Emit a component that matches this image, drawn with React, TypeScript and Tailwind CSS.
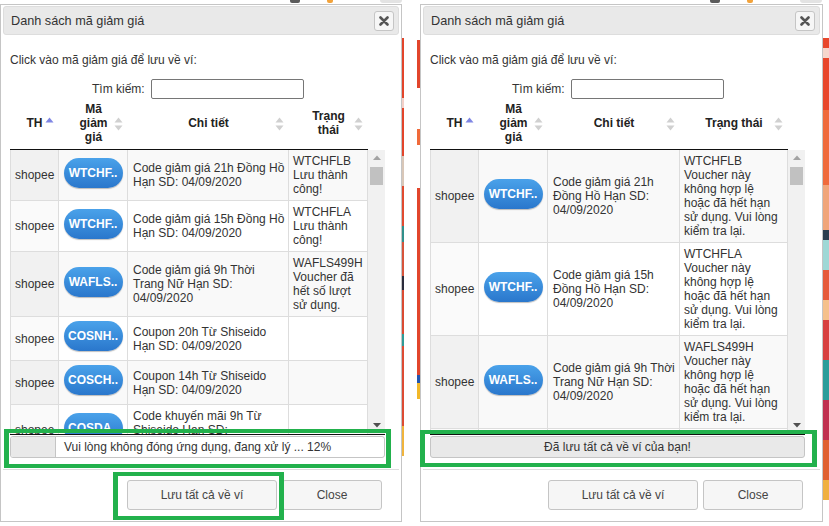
import React from 'react';

type Row = { code: string; detail: string[]; status: string[] };
type Head = { lines: string[]; active?: boolean };

const invalid = (code: string) => [
  code,
  'Voucher này',
  'không hợp lệ',
  'hoặc đã hết hạn',
  'sử dụng. Vui lòng',
  'kiểm tra lại.',
];

const leftRows: Row[] = [
  { code: 'WTCHF..', detail: ['Code giảm giá 21h Đồng Hồ', 'Hạn SD: 04/09/2020'], status: ['WTCHFLB', 'Lưu thành', 'công!'] },
  { code: 'WTCHF..', detail: ['Code giảm giá 15h Đồng Hồ', 'Hạn SD: 04/09/2020'], status: ['WTCHFLA', 'Lưu thành', 'công!'] },
  { code: 'WAFLS..', detail: ['Code giảm giá 9h Thời', 'Trang Nữ Hạn SD:', '04/09/2020'], status: ['WAFLS499H', 'Voucher đã', 'hết số lượt', 'sử dụng.'] },
  { code: 'COSNH..', detail: ['Coupon 20h Từ Shiseido', 'Hạn SD: 04/09/2020'], status: [] },
  { code: 'COSCH..', detail: ['Coupon 14h Từ Shiseido', 'Hạn SD: 04/09/2020'], status: [] },
  { code: 'COSDA..', detail: ['Code khuyến mãi 9h Từ', 'Shiseido Hạn SD:', '04/09/2020'], status: [] },
];

const rightRows: Row[] = [
  { code: 'WTCHF..', detail: ['Code giảm giá 21h', 'Đồng Hồ Hạn SD:', '04/09/2020'], status: invalid('WTCHFLB') },
  { code: 'WTCHF..', detail: ['Code giảm giá 15h', 'Đồng Hồ Hạn SD:', '04/09/2020'], status: invalid('WTCHFLA') },
  { code: 'WAFLS..', detail: ['Code giảm giá 9h Thời', 'Trang Nữ Hạn SD:', '04/09/2020'], status: invalid('WAFLS499H') },
  { code: 'COSNH..', detail: ['Coupon 20h Từ', 'Shiseido Hạn SD:', '04/09/2020'], status: invalid('COSNHSH20H') },
];

const leftHeads: Head[] = [
  { lines: ['TH'], active: true },
  { lines: ['Mã', 'giảm', 'giá'] },
  { lines: ['Chi tiết'] },
  { lines: ['Trạng', 'thái'] },
];

const rightHeads: Head[] = [
  { lines: ['TH'], active: true },
  { lines: ['Mã', 'giảm', 'giá'] },
  { lines: ['Chi tiết'] },
  { lines: ['Trạng thái'] },
];

function SortIcon({ active }: { active?: boolean }) {
  return (
    <svg width="9" height="15" viewBox="0 0 9 15" className="absolute right-[5px] top-1/2 -translate-y-1/2">
      <polygon points="0.5,6 4.5,1 8.5,6" fill={active ? '#7f86e4' : '#d0d0d0'} />
      {!active && <polygon points="0.5,9 4.5,14 8.5,9" fill="#d0d0d0" />}
    </svg>
  );
}

function CloseIcon() {
  return (
    <svg width="10" height="10" viewBox="0 0 10 10">
      <path d="M1.5 1.5 L8.5 8.5 M8.5 1.5 L1.5 8.5" stroke="#555" strokeWidth="2.6" strokeLinecap="round" />
    </svg>
  );
}

function Strip({ parts, className = '' }: { parts: [number, string][]; className?: string }) {
  return (
    <div className={`flex flex-col ${className}`}>
      {parts.map(([h, c], i) => (
        <div key={i} style={{ height: h, background: c }} />
      ))}
    </div>
  );
}

function TopBits() {
  return (
    <div className="h-[4px] flex items-start">
      <div className="ml-[290px] w-[10px] h-[3px] bg-[#5b5b5b] rounded-b-[2px]" />
      <div className="ml-[27px] w-[6px] h-[3px] bg-[#f2a23a] rounded-b-[2px]" />
      <div className="ml-[47px] w-[22px] h-[3px] bg-[#e3e3e3] rounded-b-full" />
    </div>
  );
}

function Lines({ lines }: { lines: string[] }) {
  return (
    <div>
      {lines.map((l) => (
        <div key={l} className="whitespace-nowrap">
          {l}
        </div>
      ))}
    </div>
  );
}

function Dialog({
  cols,
  heads,
  rows,
  footer,
  overlays,
}: {
  cols: string;
  heads: Head[];
  rows: Row[];
  footer: React.ReactNode;
  overlays: React.ReactNode;
}) {
  return (
    <div className="relative border border-[#c5c5c5] bg-white px-[2px] pt-[1px] flex flex-col">
      {/* Title bar */}
      <div className="h-[29px] border border-[#dddddd] bg-[#e9e9e9] rounded-[3px] flex items-center justify-between pl-[7px] pr-[4px]">
        <span className="text-[12.7px] text-[#333]">Danh sách mã giảm giá</span>
        <button className="w-[20px] h-[20px] border border-[#c5c5c5] bg-[#f6f6f6] rounded-[3px] flex items-center justify-center">
          <CloseIcon />
        </button>
      </div>

      {/* Body */}
      <div className="pl-[7px] pt-[18px] pb-[11px]">
        <div className="w-[375px]">
          <div>Click vào mã giảm giá để lưu về ví:</div>
          <div className="mt-[12px] h-[20px] flex items-center pl-[82px]">
            <span>Tìm kiếm:</span>
            <input className="ml-[6px] w-[153px] h-[20px] border border-[#767676] rounded-[2px] bg-white outline-none" />
          </div>

          {/* Header */}
          <div className="w-[358px]">
            <div className={`grid ${cols} h-[51px] border-b border-[#111] font-bold text-[#222]`}>
              {heads.map((h, i) => (
                <div key={i} className="relative flex items-center justify-center text-center px-[14px] pb-[2px]">
                  <Lines lines={h.lines} />
                  <SortIcon active={h.active} />
                </div>
              ))}
            </div>
          </div>

          {/* Scroll body */}
          <div className="flex h-[285px] border-b border-[#111]">
            <div className="w-[358px] overflow-hidden">
              {rows.map((r, i) => {
                const odd = i % 2 === 0;
                return (
                  <div key={i} className={`grid ${cols} border-b border-[#dddddd] ${odd ? 'bg-[#f9f9f9]' : 'bg-white'}`}>
                    <div className={`flex items-center px-[4px] py-[4px] border-l border-r border-[#dddddd] ${odd ? 'bg-[#f1f1f1]' : 'bg-[#fafafa]'}`}>
                      shopee
                    </div>
                    <div className="flex items-center justify-center py-[4px] border-r border-[#dddddd]">
                      <button className="mb-[5px] w-[59px] h-[30px] rounded-full bg-gradient-to-b from-[#4aa2ea] to-[#2a77cc] text-white font-bold shadow-[0_1px_1px_rgba(0,0,0,0.25)]">
                        {r.code}
                      </button>
                    </div>
                    <div className="flex items-center px-[5px] py-[4px] border-r border-[#dddddd] overflow-hidden">
                      <Lines lines={r.detail} />
                    </div>
                    <div className="px-[4px] py-[4px] border-r border-[#dddddd] overflow-hidden">
                      <Lines lines={r.status} />
                    </div>
                  </div>
                );
              })}
            </div>
            {/* Scrollbar */}
            <div className="w-[17px] bg-[#f1f1f1] flex flex-col items-center pt-[5px] pb-[6px]">
              <svg width="8" height="5" viewBox="0 0 8 5">
                <polygon points="0,5 4,0.5 8,5" fill="#a3a3a3" />
              </svg>
              <div className="mt-[7px] w-[13px] h-[18px] bg-[#c1c1c1]" />
              <div className="flex-1" />
              <svg width="8" height="5" viewBox="0 0 8 5">
                <polygon points="0,0 4,4.5 8,0" fill="#505050" />
              </svg>
            </div>
          </div>

          <div className="mt-[1px]">{footer}</div>
        </div>
      </div>

      {/* Button pane */}
      <div className="border-t border-[#dddddd] pt-[10px] pb-[11px] pr-[17px] flex justify-end gap-[5px]">
        <button className="w-[150px] h-[30px] border border-[#c5c5c5] bg-[#f6f6f6] rounded-[3px] text-[#454545]">
          Lưu tất cả về ví
        </button>
        <button className="w-[100px] h-[30px] border border-[#c5c5c5] bg-[#f6f6f6] rounded-[3px] text-[#454545]">
          Close
        </button>
      </div>

      {overlays}
    </div>
  );
}

function Progress({ pct }: { pct: number }) {
  return (
    <div className="relative h-[22px] border border-[#c5c5c5] rounded-[3px] bg-white overflow-hidden flex items-center justify-center">
      <div className="absolute left-0 top-0 bottom-0 bg-[#e9e9e9] border-r border-[#c5c5c5]" style={{ width: `${pct}%` }} />
      <span className="relative">Vui lòng không đóng ứng dụng, đang xử lý ... {pct}%</span>
    </div>
  );
}

const greenBox = 'absolute border-[#22b14c] border-x-[5px] border-y-[4px] pointer-events-none';

export default function App() {
  return (
    <div className="w-[829px] h-[526px] bg-white overflow-hidden flex font-['Liberation_Sans',Arial,sans-serif] text-[12px] leading-[14px] text-[#333]">
      {/* Left dialog */}
      <div className="w-[402px] flex flex-col">
        <TopBits />
        <Dialog
          cols="grid-cols-[49px_69px_161px_79px]"
          heads={leftHeads}
          rows={leftRows}
          footer={<Progress pct={12} />}
          overlays={
            <>
              <div className={`${greenBox} left-[3px] top-[424px] w-[387px] h-[39px]`} />
              <div className={`${greenBox} left-[112px] top-[467px] w-[171px] h-[48px]`} />
            </>
          }
        />
      </div>

      {/* Page background between dialogs */}
      <div className="w-[18px] flex">
        <Strip
          className="w-[2px]"
          parts={[
            [38, '#ffffff'],
            [60, '#e2452b'],
            [10, '#f3d0c8'],
            [48, '#e2452b'],
            [30, '#d9c7b8'],
            [40, '#e04a30'],
            [16, '#2f8f8a'],
            [34, '#d6533a'],
            [14, '#2b2b3a'],
            [44, '#d94a32'],
            [12, '#2f9a96'],
            [80, '#dc4b33'],
            [30, '#f0b43c'],
          ]}
        />
        <div className="flex-1" />
        <Strip
          className="w-[3px]"
          parts={[
            [40, '#ffffff'],
            [48, '#e2452b'],
            [41, '#ffffff'],
            [16, '#f06a3a'],
            [43, '#ffffff'],
            [187, '#e2452b'],
            [8, '#2255b0'],
            [16, '#f2b829'],
          ]}
        />
      </div>

      {/* Right dialog */}
      <div className="w-[403px] flex flex-col">
        <TopBits />
        <Dialog
          cols="grid-cols-[49px_69px_132px_108px]"
          heads={rightHeads}
          rows={rightRows}
          footer={
            <div className="h-[22px] border border-[#c5c5c5] rounded-[3px] bg-[#e9e9e9] flex items-center justify-center">
              Đã lưu tất cả về ví của bạn!
            </div>
          }
          overlays={<div className={`${greenBox} left-[-1px] top-[425px] w-[397px] h-[37px]`} />}
        />
      </div>

      {/* Right page edge */}
      <Strip
        className="w-[6px]"
        parts={[
          [38, '#ffffff'],
          [10, '#e8472c'],
          [10, '#f6d6cc'],
          [52, '#e8472c'],
          [75, '#ef6a3c'],
          [45, '#f0a57a'],
          [10, '#2c3e50'],
          [30, '#9fd8d6'],
          [30, '#e65a3a'],
          [20, '#f5c08a'],
          [40, '#d84040'],
          [40, '#2a9d9a'],
          [40, '#c03050'],
          [40, '#e06030'],
          [20, '#f0b040'],
          [26, '#ffffff'],
        ]}
      />
    </div>
  );
}
